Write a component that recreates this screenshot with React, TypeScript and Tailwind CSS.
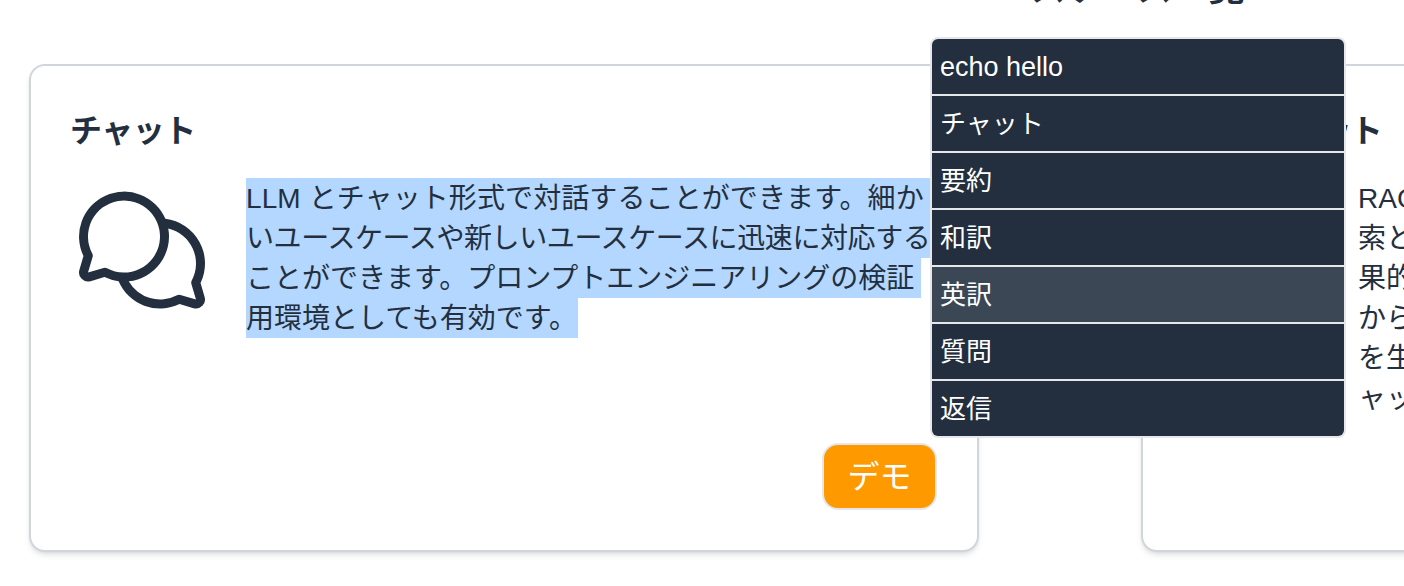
import React from 'react';
import { PiChatsCircle } from 'react-icons/pi';

const FONT = "font-['Liberation_Sans','Noto_Sans_CJK_JP',sans-serif]";

const MENU = ['echo hello', 'チャット', '要約', '和訳', '英訳', '質問', '返信'];

const CHAT_LINES = [
  { text: 'LLM とチャット形式で対話することができます。細か', cls: 'w-[684px] tracking-[0.1px]' },
  { text: 'いユースケースや新しいユースケースに迅速に対応する', cls: 'w-[684px] tracking-[-0.4px]' },
  { text: 'ことができます。プロンプトエンジニアリングの検証', cls: 'w-[675px]' },
  { text: '用環境としても有効です。', cls: 'w-[332px]' },
];

const RAG_LINES = [
  'RAG (Retrieval Augmented Generation) は、情報の検',
  '索と LLM の文章生成を組み合わせることで、効',
  '果的な情報アクセスを実現できる手法です。Amazon Kendra',
  'から取得した参考ドキュメントをベースに LLM が回答',
  'を生成するため、「社内情報に対応した LLM チ',
  'ャット」を簡単に実現することが可能です。',
];

const UseCaseMenu: React.FC = () => {
  return (
    <div className="absolute left-[930px] top-[37px] z-10 w-[416px] overflow-hidden rounded-lg border-2 border-gray-200 bg-gray-200">
      <div className="flex flex-col gap-[2px]">
        {MENU.map((item) => (
          <div
            key={item}
            className={`flex h-[55px] items-center px-2 pt-[2px] text-white ${item === 'echo hello' ? 'text-[27px]' : 'text-[26px]'} ${item === '英訳' ? 'bg-[#3c4755]' : 'bg-[#232f3e]'}`}
          >
            {item}
          </div>
        ))}
      </div>
    </div>
  );
};

export default function App() {
  return (
    <div className={`relative h-[586px] w-[1404px] overflow-hidden bg-white text-[#232f3e] ${FONT}`}>
      <h1 className="mt-[-33px] pl-[960px] text-[36px] font-bold leading-[44px] whitespace-nowrap">ユースケース一覧</h1>

      <div className="mt-[53px] flex gap-[162px] pl-[29px]">
        <div className="flex h-[488px] w-[950px] shrink-0 flex-col rounded-2xl border-2 border-gray-300 bg-white p-[40px] shadow-md">
          <h2 className="-ml-[1px] text-[32px] leading-[50px] font-bold tracking-[-0.5px]">チャット</h2>
          <div className="mt-[22px] flex">
            <PiChatsCircle className="-ml-[1px] shrink-0 text-[144px]" />
            <div className="ml-[32px] text-[28px] whitespace-nowrap">
              {CHAT_LINES.map((line) => (
                <div key={line.text} className={`h-[40px] bg-[#b3d7ff] leading-[41px] ${line.cls}`}>{line.text}</div>
              ))}
            </div>
          </div>
          <div className="mt-auto flex justify-end">
            <button className="h-[67px] w-[115px] rounded-2xl border-2 border-gray-200 bg-[#ff9900] text-[32px] text-white">
              デモ
            </button>
          </div>
        </div>

        <div className="h-[488px] w-[950px] shrink-0 rounded-2xl border-2 border-gray-300 bg-white p-[40px] shadow-md">
          <h2 className="-ml-[1px] text-[32px] leading-[50px] font-bold tracking-[-1px]">RAG チャット</h2>
          <div className="mt-[22px] flex">
            <div className="-ml-[1px] w-[144px] shrink-0" />
            <div className="ml-[32px] text-[28px] whitespace-nowrap">
              {RAG_LINES.map((line) => (
                <div key={line} className="h-[40px] leading-[41px]">{line}</div>
              ))}
            </div>
          </div>
        </div>
      </div>

      <UseCaseMenu />
    </div>
  );
}
